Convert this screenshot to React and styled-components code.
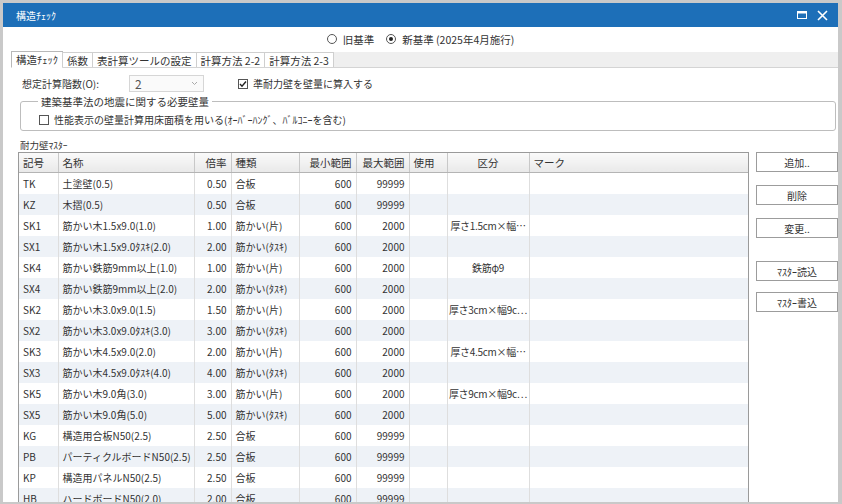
import React from "react";
import styled, { createGlobalStyle } from "styled-components";

const GlobalStyle = createGlobalStyle`
  body {
    margin: 0;
    background: #c8c8c8;
    font-family: "Noto Sans CJK JP", "Liberation Sans", sans-serif;
  }
`;

const Window = styled.div`
  width: 842px;
  height: 504px;
  box-sizing: border-box;
  border-style: solid;
  border-color: #c9c9c9;
  border-width: 3px 4px 2px 3px;
  background: #fff;
  overflow: hidden;
  display: flex;
  flex-direction: column;
  color: #333;
  font-size: 10px;
`;

const TitleBar = styled.div`
  height: 24px;
  flex-shrink: 0;
  background: #1d6fb8;
  color: #fff;
  display: flex;
  align-items: center;
  padding: 0 6px 0 13px;
  font-size: 10px;
`;

const Title = styled.span`
  flex: 1;
`;

const TitleButton = styled.span`
  width: 20px;
  display: flex;
  justify-content: center;
  align-items: center;
`;

const RadioRow = styled.div`
  height: 23px;
  flex-shrink: 0;
  display: flex;
  justify-content: center;
  align-items: center;
  gap: 12px;
  padding-top: 1px;
  box-sizing: border-box;
  font-size: 10.5px;
`;

const RadioLabel = styled.label`
  display: flex;
  align-items: center;
  gap: 6px;
`;

const RadioDot = styled.span`
  width: 10px;
  height: 10px;
  box-sizing: border-box;
  border: 1px solid #555;
  border-radius: 50%;
  display: flex;
  align-items: center;
  justify-content: center;
  &::after {
    content: "";
    width: 4px;
    height: 4px;
    border-radius: 50%;
    background: ${(p) => (p.checked ? "#222" : "transparent")};
  }
`;

const TabStrip = styled.div`
  height: 17px;
  flex-shrink: 0;
  margin-left: 8px;
  display: flex;
  align-items: flex-end;
  background: linear-gradient(#fff 0, #fff 2px, #efefef 2px);
  border-bottom: 1px solid #d4d4d4;
`;

const Tab = styled.div`
  height: ${(p) => (p.active ? "17px" : "15px")};
  box-sizing: border-box;
  padding: 0 4px;
  display: flex;
  align-items: center;
  background: #fff;
  border: 1px solid ${(p) => (p.active ? "#b8b8b8" : "#cfcfcf")};
  border-bottom: ${(p) => (p.active ? "1px solid #fff" : "none")};
  margin-bottom: ${(p) => (p.active ? "-1px" : "0")};
  margin-right: -1px;
  font-size: 10.5px;
  line-height: 13px;
  color: #333;
  white-space: nowrap;
`;

const Content = styled.div`
  flex: 1;
  display: flex;
  flex-direction: column;
  padding: 0 0 0 15px;
  min-height: 0;
`;

const FormRow = styled.div`
  height: 17px;
  margin-top: 7px;
  display: flex;
  align-items: center;
`;

const FieldLabel = styled.span`
  width: 107px;
  padding-left: 4px;
`;

const Combo = styled.div`
  width: 75px;
  height: 17px;
  box-sizing: border-box;
  border: 1px solid #d6d6d6;
  background: #fafafa;
  display: flex;
  align-items: center;
  justify-content: space-between;
  padding: 0 5px;
  font-size: 12px;
  color: #555;
`;

const CheckLabel = styled.label`
  display: flex;
  align-items: center;
  gap: 5px;
  line-height: 14px;
  margin-left: ${(p) => p.offset || 0}px;
  white-space: nowrap;
`;

const CheckBox = styled.span`
  width: 10px;
  height: 10px;
  box-sizing: border-box;
  border: 1px solid #555;
  background: #fff;
  display: flex;
  align-items: center;
  justify-content: center;
`;

const GroupBox = styled.fieldset`
  margin: 4px 2px 0 2px;
  padding: 6px 0 3px 15px;
  border: 1px solid #bdbdbd;
  border-radius: 3px;
  min-width: 0;
`;

const Legend = styled.legend`
  padding: 0 3px;
  margin-left: 2px;
  font-size: 10.5px;
  line-height: 11px;
`;

const SectionLabel = styled.div`
  margin: 8px 0 0 2px;
  height: 13px;
  font-size: 9.5px;
  line-height: 13px;
`;

const Main = styled.div`
  flex: 1;
  display: flex;
  gap: 7px;
  min-height: 0;
`;

const TableWrap = styled.div`
  width: 731px;
  flex-shrink: 0;
  box-sizing: border-box;
  border: 1px solid #9a9a9a;
  border-bottom: none;
  overflow: hidden;
`;

const Table = styled.table`
  width: 729px;
  border-collapse: collapse;
  table-layout: fixed;
  font-size: 10px;
`;

const Th = styled.th`
  height: 19px;
  padding: 0 4px;
  font-weight: normal;
  font-size: 10.5px;
  text-align: ${(p) => p.align || "left"};
  background: linear-gradient(#fafafa, #e9e9e9);
  border-right: 1px solid #c8c8c8;
  border-bottom: 1px solid #b4b4b4;
  color: #333;
  white-space: nowrap;
  overflow: hidden;
`;

const Tr = styled.tr`
  background: ${(p) => (p.striped ? "#eef2f7" : "#fff")};
`;

const Td = styled.td`
  height: 21px;
  padding: 0 ${(p) => (p.align === "center" ? 1 : 4)}px;
  text-align: ${(p) => p.align || "left"};
  letter-spacing: ${(p) => (p.align === "center" ? "-0.3px" : "0")};
  border-right: 1px solid #dedede;
  white-space: nowrap;
  overflow: hidden;
  color: #333;
`;

const ButtonColumn = styled.div`
  width: 82px;
  display: flex;
  flex-direction: column;
`;

const Button = styled.button`
  height: 20px;
  margin-top: ${(p) => p.gap || 0}px;
  border: 1px solid #9c9c9c;
  background: #fff;
  font-family: inherit;
  font-size: 10px;
  color: #333;
  padding: 0;
`;

const columns = [
  { key: "code", label: "記号", width: 39 },
  { key: "name", label: "名称", width: 136 },
  { key: "rate", label: "倍率", width: 37, align: "right" },
  { key: "kind", label: "種類", width: 68 },
  { key: "min", label: "最小範囲", width: 57, align: "right" },
  { key: "max", label: "最大範囲", width: 53, align: "right" },
  { key: "use", label: "使用", width: 38 },
  { key: "cat", label: "区分", width: 82, align: "center" },
  { key: "mark", label: "マーク", width: 219 },
];

const rows = [
  ["TK", "土塗壁(0.5)", "0.50", "合板", "600", "99999", "", ""],
  ["KZ", "木摺(0.5)", "0.50", "合板", "600", "99999", "", ""],
  ["SK1", "筋かい木1.5x9.0(1.0)", "1.00", "筋かい(片)", "600", "2000", "", "厚さ1.5cm×幅…"],
  ["SX1", "筋かい木1.5x9.0ﾀｽｷ(2.0)", "2.00", "筋かい(ﾀｽｷ)", "600", "2000", "", ""],
  ["SK4", "筋かい鉄筋9mm以上(1.0)", "1.00", "筋かい(片)", "600", "2000", "", "鉄筋φ9"],
  ["SX4", "筋かい鉄筋9mm以上(2.0)", "2.00", "筋かい(ﾀｽｷ)", "600", "2000", "", ""],
  ["SK2", "筋かい木3.0x9.0(1.5)", "1.50", "筋かい(片)", "600", "2000", "", "厚さ3cm×幅9c…"],
  ["SX2", "筋かい木3.0x9.0ﾀｽｷ(3.0)", "3.00", "筋かい(ﾀｽｷ)", "600", "2000", "", ""],
  ["SK3", "筋かい木4.5x9.0(2.0)", "2.00", "筋かい(片)", "600", "2000", "", "厚さ4.5cm×幅…"],
  ["SX3", "筋かい木4.5x9.0ﾀｽｷ(4.0)", "4.00", "筋かい(ﾀｽｷ)", "600", "2000", "", ""],
  ["SK5", "筋かい木9.0角(3.0)", "3.00", "筋かい(片)", "600", "2000", "", "厚さ9cm×幅9c…"],
  ["SX5", "筋かい木9.0角(5.0)", "5.00", "筋かい(ﾀｽｷ)", "600", "2000", "", ""],
  ["KG", "構造用合板N50(2.5)", "2.50", "合板", "600", "99999", "", ""],
  ["PB", "パーティクルボードN50(2.5)", "2.50", "合板", "600", "99999", "", ""],
  ["KP", "構造用パネルN50(2.5)", "2.50", "合板", "600", "99999", "", ""],
  ["HB", "ハードボードN50(2.0)", "2.00", "合板", "600", "99999", "", ""],
];

const tabs = ["構造ﾁｪｯｸ", "係数", "表計算ツールの設定", "計算方法 2-2", "計算方法 2-3"];

const Check = ({ checked }) => (
  <CheckBox>
    {checked && (
      <svg width="8" height="8" viewBox="0 0 8 8">
        <path d="M1 4 L3 6.2 L7 1.5" stroke="#222" strokeWidth="1.4" fill="none" />
      </svg>
    )}
  </CheckBox>
);

function App() {
  return (
    <>
      <GlobalStyle />
      <Window>
        <TitleBar>
          <Title>構造ﾁｪｯｸ</Title>
          <TitleButton>
            <svg width="10" height="8" viewBox="0 0 10 8">
              <rect x="0.5" y="0.5" width="9" height="7" fill="none" stroke="#fff" />
              <rect x="0.5" y="0.5" width="9" height="2" fill="#fff" />
            </svg>
          </TitleButton>
          <TitleButton>
            <svg width="11" height="11" viewBox="0 0 11 11">
              <path d="M1 1 L10 10 M10 1 L1 10" stroke="#fff" strokeWidth="1.6" />
            </svg>
          </TitleButton>
        </TitleBar>

        <RadioRow>
          <RadioLabel>
            <RadioDot />
            旧基準
          </RadioLabel>
          <RadioLabel>
            <RadioDot checked />
            新基準 (2025年4月施行)
          </RadioLabel>
        </RadioRow>

        <TabStrip>
          {tabs.map((t, i) => (
            <Tab key={t} active={i === 0}>
              {t}
            </Tab>
          ))}
        </TabStrip>

        <Content>
          <FormRow>
            <FieldLabel>想定計算階数(O):</FieldLabel>
            <Combo>
              <span>2</span>
              <svg width="7" height="5" viewBox="0 0 7 5">
                <path d="M1 1 L3.5 3.5 L6 1" stroke="#aaa" fill="none" />
              </svg>
            </Combo>
            <CheckLabel offset={34}>
              <Check checked />
              準耐力壁を壁量に算入する
            </CheckLabel>
          </FormRow>

          <GroupBox>
            <Legend>建築基準法の地震に関する必要壁量</Legend>
            <CheckLabel offset={3}>
              <Check />
              性能表示の壁量計算用床面積を用いる(ｵｰﾊﾞｰﾊﾝｸﾞ、ﾊﾞﾙｺﾆｰを含む)
            </CheckLabel>
          </GroupBox>

          <SectionLabel>耐力壁ﾏｽﾀｰ</SectionLabel>

          <Main>
            <TableWrap>
              <Table>
                <colgroup>
                  {columns.map((c) => (
                    <col key={c.key} style={{ width: c.width }} />
                  ))}
                </colgroup>
                <thead>
                  <tr>
                    {columns.map((c) => (
                      <Th key={c.key} align={c.align}>
                        {c.label}
                      </Th>
                    ))}
                  </tr>
                </thead>
                <tbody>
                  {rows.map((r, i) => (
                    <Tr key={r[0]} striped={i % 2 === 1}>
                      {columns.map((c, j) => (
                        <Td key={c.key} align={c.align}>
                          {r[j] || ""}
                        </Td>
                      ))}
                    </Tr>
                  ))}
                </tbody>
              </Table>
            </TableWrap>

            <ButtonColumn>
              <Button>追加..</Button>
              <Button gap={13}>削除</Button>
              <Button gap={13}>変更..</Button>
              <Button gap={23}>ﾏｽﾀｰ読込</Button>
              <Button gap={11}>ﾏｽﾀｰ書込</Button>
            </ButtonColumn>
          </Main>
        </Content>
      </Window>
    </>
  );
}

export default App;
